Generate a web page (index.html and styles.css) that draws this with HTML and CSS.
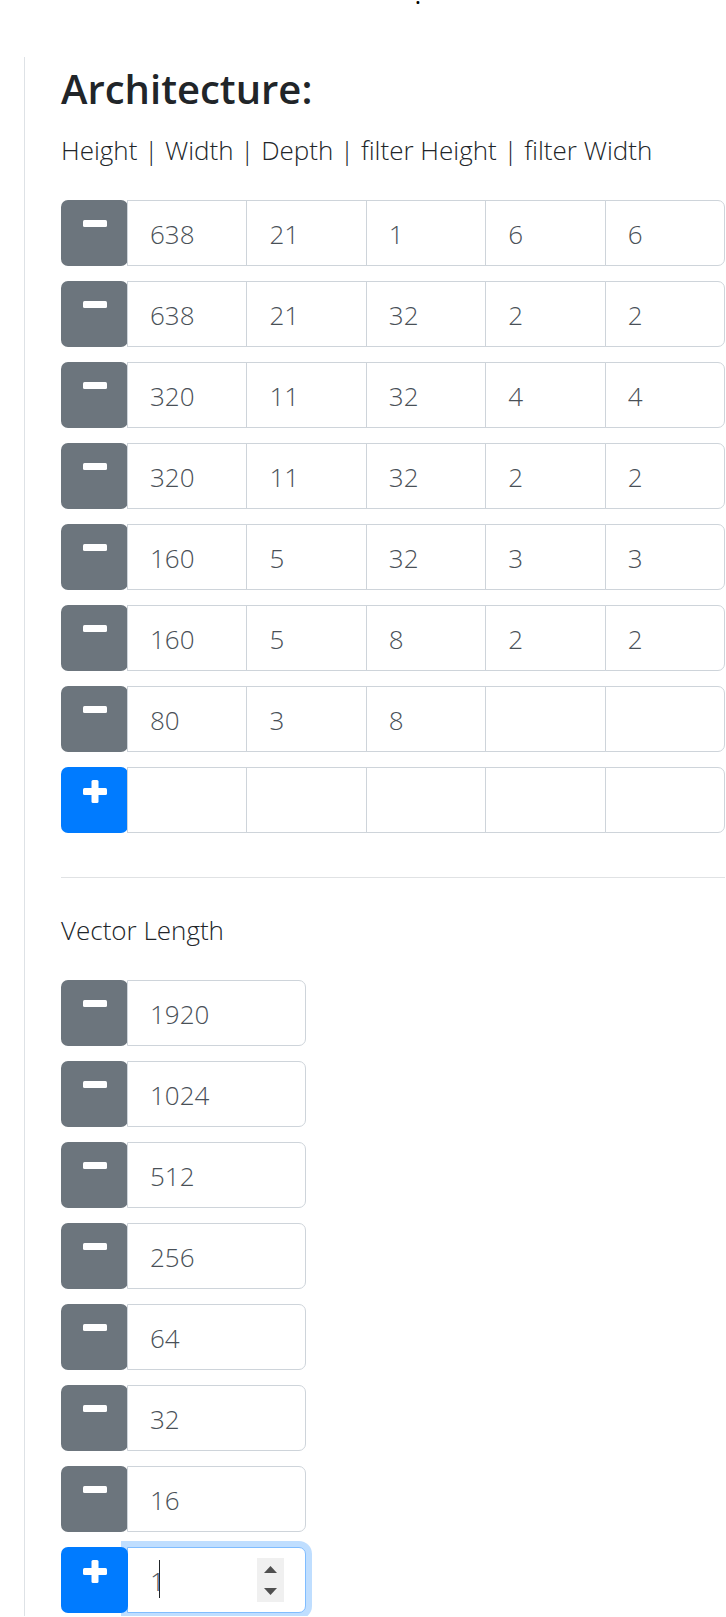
FILE: index.html
```html
<!DOCTYPE html>
<html lang="en">
<head>
<meta charset="utf-8">
<meta name="viewport" content="width=device-width, initial-scale=1">
<title>Architecture</title>
<link rel="stylesheet" href="styles.css">
</head>
<body>
<header class="lead">.</header>
<main class="panel">
  <h1 class="title">Architecture:</h1>
  <p class="caption">Height | Width | Depth | filter Height | filter Width</p>
  <div class="rows" id="layers"></div>
  <hr class="divider">
  <p class="caption">Vector Length</p>
  <div class="rows rows-narrow" id="vectors"></div>
</main>
<script src="app.js"></script>
</body>
</html>
```
FILE: styles.css
```css
* { box-sizing: border-box; }

body {
  margin: 0;
  background: #fff;
  color: #212529;
  font-family: "Open Sans", "Noto Sans", sans-serif;
  font-weight: 300;
  overflow-x: hidden;
}

.lead {
  height: 62px;
  margin-top: -5px;
  padding-left: 110px;
  text-align: center;
  font-size: 24px;
  font-weight: 400;
  line-height: 0;
  color: #000;
}

.panel {
  margin: 0 1px 0 24px;
  padding: 8px 0 3px 36px;
  border-left: 1px solid #dee2e6;
}

.title {
  margin: 0;
  font-size: 40px;
  font-weight: 600;
  line-height: 48px;
}

.caption {
  margin: 14px 0 26px;
  font-size: 26px;
  line-height: 47px;
}

.rows {
  display: grid;
  gap: 15px;
}

.rows-narrow { max-width: 245px; }

.group { display: flex; }

.toggle {
  position: relative;
  z-index: 2;
  display: flex;
  flex: none;
  justify-content: center;
  align-items: flex-start;
  width: 67px;
  height: 66px;
  padding: 12px 0 0;
  border: 0;
  border-radius: 7px;
  background: #6c757d;
}

.toggle-add { background: #007bff; }

.icon {
  width: 24px;
  height: 24px;
  fill: #fff;
}

.cell {
  position: relative;
  z-index: 2;
  flex: 1;
  min-width: 0;
  margin-left: -1px;
}

.field {
  display: block;
  width: 100%;
  height: 66px;
  padding: 2px 22px 0;
  border: 1px solid #ced4da;
  border-radius: 0;
  background: #fff;
  color: #495057;
  font: inherit;
  font-size: 26px;
  appearance: textfield;
  outline: 0;
}

.field::-webkit-inner-spin-button { display: none; }

.cell:last-child .field { border-radius: 0 7px 7px 0; }

.cell-active { z-index: 1; }

.cell-active .field {
  border-color: #80bdff;
  box-shadow: 0 0 0 6px #bfdeff;
  caret-color: transparent;
}

.caret {
  position: absolute;
  top: 13px;
  left: 32px;
  width: 1px;
  height: 38px;
  background: #212529;
}

.stepper {
  position: absolute;
  top: 11px;
  right: 22px;
  display: flex;
  flex-direction: column;
  width: 27px;
  height: 44px;
  background: #f0f0f0;
}

.step {
  display: flex;
  flex: 1;
  align-items: center;
  justify-content: center;
  padding: 0;
  border: 0;
  background: none;
}

.step svg {
  width: 13px;
  height: 7px;
  fill: #505050;
}

.divider {
  margin: 44px 0 0;
  border: 0;
  border-top: 1px solid #e0e2e4;
}

.divider + .caption { margin: 29px 0 26px; }
```
FILE: app.js
```
const layers = [
  [638, 21, 1, 6, 6],
  [638, 21, 32, 2, 2],
  [320, 11, 32, 4, 4],
  [320, 11, 32, 2, 2],
  [160, 5, 32, 3, 3],
  [160, 5, 8, 2, 2],
  [80, 3, 8, "", ""],
  ["", "", "", "", ""]
];
const vectors = [[1920], [1024], [512], [256], [64], [32], [16], [1]];
const columns = ["Height", "Width", "Depth", "Filter height", "Filter width"];

const minus = '<svg class="icon" viewBox="0 0 24 24" aria-hidden="true"><rect y="8" width="24" height="7" rx="1.5"/></svg>';
const plus = '<svg class="icon" viewBox="0 0 24 24" aria-hidden="true"><rect y="9" width="24" height="7" rx="1.5"/><rect x="8.5" y="1" width="7" height="23" rx="1.5"/></svg>';
const stepper = '<span class="caret"></span><span class="stepper">' +
  '<button class="step" type="button" aria-label="Increase"><svg viewBox="0 0 13 7"><path d="M6.5 0 13 7H0z"/></svg></button>' +
  '<button class="step" type="button" aria-label="Decrease"><svg viewBox="0 0 13 7"><path d="M0 0h13L6.5 7z"/></svg></button></span>';

function render(id, rows, labels, activeLast) {
  document.getElementById(id).innerHTML = rows.map((row, r) => {
    const last = r === rows.length - 1;
    const active = last && activeLast;
    const cells = row.map((value, c) =>
      `<div class="cell${active ? " cell-active" : ""}"><input class="field" type="number" aria-label="${labels[c]} ${r + 1}" value="${value}">${active ? stepper : ""}</div>`
    ).join("");
    return `<div class="group"><button class="toggle${last ? " toggle-add" : ""}" type="button" aria-label="${last ? "Add row" : "Remove row"}">${last ? plus : minus}</button>${cells}</div>`;
  }).join("");
}

render("layers", layers, columns, false);
render("vectors", vectors, ["Vector length"], true);
```
